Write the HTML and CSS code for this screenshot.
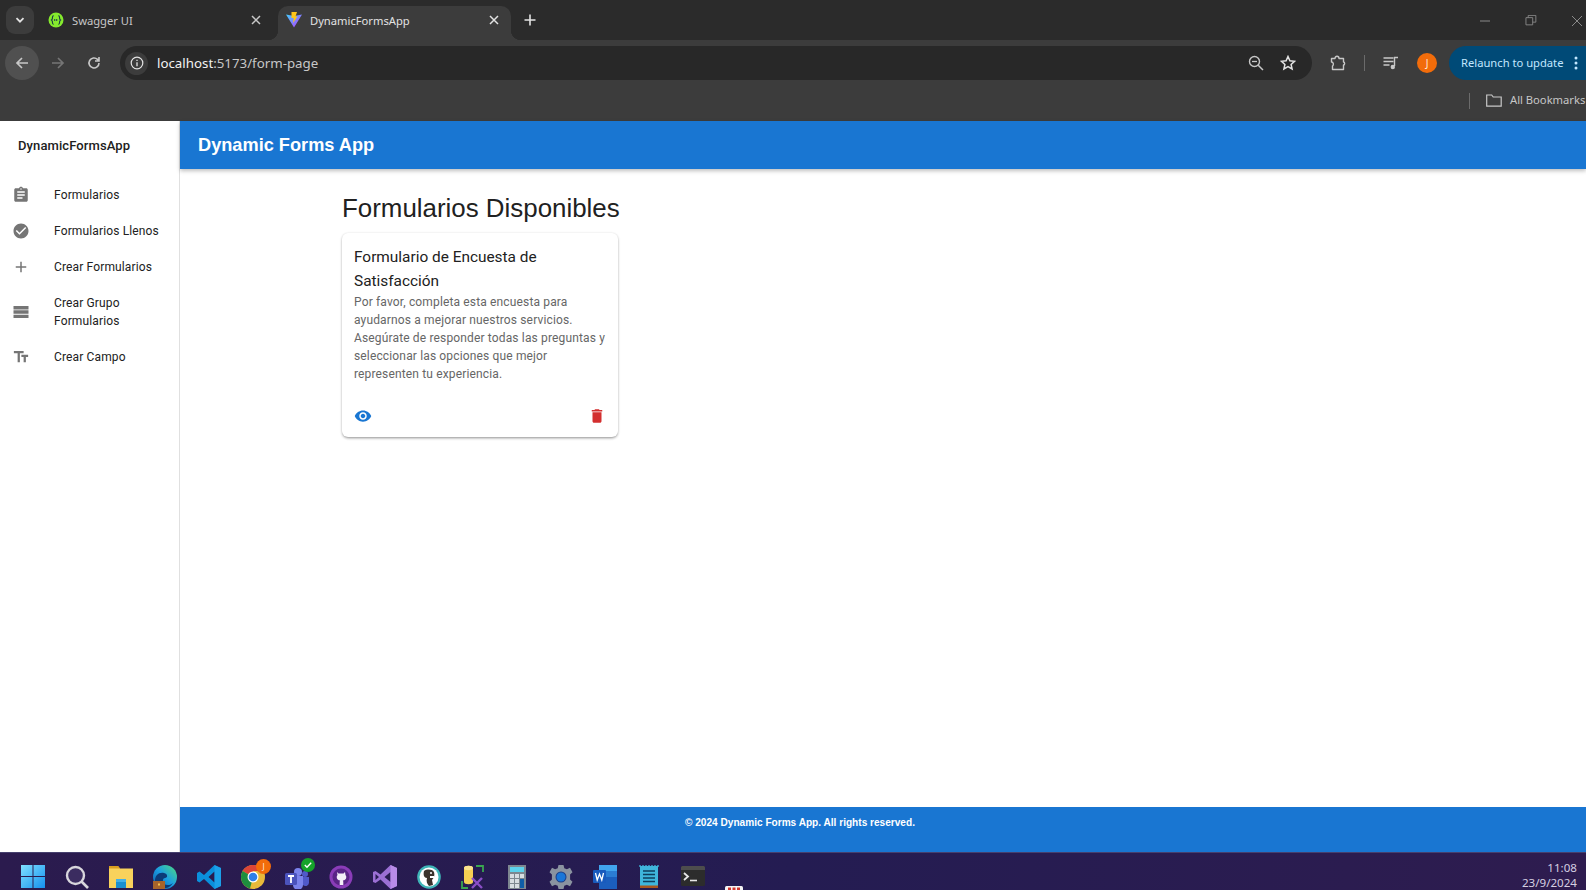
FILE: index.html
```html
<!DOCTYPE html>
<html lang="es">
<head>
<meta charset="utf-8">
<title>DynamicFormsApp</title>
<link rel="stylesheet" href="styles.css">
</head>
<body>
<div class="chrome">
  <div class="tabstrip">
    <div class="tab-search"><svg width="10" height="10" viewBox="0 0 10 10"><path d="M1.5 3.2 5 6.7l3.5-3.5" fill="none" stroke="#e3e3e3" stroke-width="1.8"/></svg></div>
    <div class="tab">
      <svg class="favicon" width="16" height="16" viewBox="0 0 16 16"><circle cx="8" cy="8" r="7.5" fill="#85ea2d"/><path d="M5.6 3.6C4 3.6 4.6 6 4.2 7.1 4 7.7 3.5 8 3.5 8s.5.3.7.9c.4 1.1-.2 3.5 1.4 3.5M10.4 3.6c1.6 0 1 2.4 1.4 3.5.2.6.7.9.7.9s-.5.3-.7.9c-.4 1.1.2 3.5-1.4 3.5" fill="none" stroke="#173647" stroke-width="1.1"/><path d="M6 8h4" stroke="#173647" stroke-width="1.3" stroke-dasharray="1.2 .7"/></svg>
      <span class="tab-title">Swagger UI</span>
      <svg class="tab-close" width="10" height="10" viewBox="0 0 10 10"><path d="M1 1l8 8M9 1 1 9" stroke="#c7c7c7" stroke-width="1.5"/></svg>
    </div>
    <div class="tab tab-active">
      <svg class="favicon" width="16" height="16" viewBox="0 0 16 16"><defs><linearGradient id="vt" x1="0" y1="0" x2="1" y2="1"><stop offset="0" stop-color="#41d1ff"/><stop offset="1" stop-color="#bd34fe"/></linearGradient></defs><path d="M0 2.5 8 15.5 16 2.5 8 4z" fill="url(#vt)"/><path d="M5.5 0H11L9.5 4.5H11.5L7 11l.7-5H5.5z" fill="#ffc517"/></svg>
      <span class="tab-title tab-title-active">DynamicFormsApp</span>
      <svg class="tab-close" width="10" height="10" viewBox="0 0 10 10"><path d="M1 1l8 8M9 1 1 9" stroke="#e3e3e3" stroke-width="1.5"/></svg>
    </div>
    <svg class="new-tab" width="12" height="12" viewBox="0 0 12 12"><path d="M6 .5v11M.5 6h11" stroke="#e3e3e3" stroke-width="1.6"/></svg>
    <div class="window-controls">
      <svg width="12" height="12" viewBox="0 0 12 12"><path d="M1 6h10" stroke="#8a8a8a"/></svg>
      <svg width="12" height="12" viewBox="0 0 12 12"><path d="M.5 3.5H8v8H.5zM3 3.5V1h8.500v7.500H8" fill="none" stroke="#8a8a8a" transform="translate(.5 -.5) scale(.9)"/></svg>
      <svg width="12" height="12" viewBox="0 0 12 12"><path d="M1 1l10 10M11 1 1 11" stroke="#8a8a8a"/></svg>
    </div>
  </div>
  <div class="toolbar">
    <div class="nav-btn nav-btn-back"><svg width="16" height="16" viewBox="0 0 16 16"><path d="M14 8H3M8 3 3 8l5 5" fill="none" stroke="#c7c7c7" stroke-width="1.7"/></svg></div>
    <div class="nav-btn"><svg width="16" height="16" viewBox="0 0 16 16"><path d="M2 8h11M8 3l5 5-5 5" fill="none" stroke="#757575" stroke-width="1.7"/></svg></div>
    <div class="nav-btn"><svg width="16" height="16" viewBox="0 0 16 16"><path d="M13 8a5 5 0 1 1-1.500-3.600L13 6M13 2v4H9" fill="none" stroke="#c7c7c7" stroke-width="1.6"/></svg></div>
    <div class="omnibox">
      <div class="site-info"><svg width="14" height="14" viewBox="0 0 14 14"><circle cx="7" cy="7" r="5.8" fill="none" stroke="#e3e3e3" stroke-width="1.2"/><path d="M7 6.200v4M7 3.800v1.300" stroke="#e3e3e3" stroke-width="1.3"/></svg></div>
      <span class="url"><span class="url-host">localhost</span>:5173/form-page</span>
      <svg class="omni-zoom" width="16" height="16" viewBox="0 0 16 16"><circle cx="6.5" cy="6.5" r="5" fill="none" stroke="#c7c7c7" stroke-width="1.4"/><path d="M10.200 10.200 15 15" stroke="#c7c7c7" stroke-width="1.5"/><path d="M4 6.500h5" stroke="#c7c7c7" stroke-width="1.3"/></svg>
      <svg class="omni-star" width="16" height="16" viewBox="0 0 16 16"><path d="m8 1.500 1.900 4.300 4.600.5-3.400 3.100 1 4.600L8 11.700l-4.100 2.300 1-4.600L1.500 6.300l4.600-.5z" fill="none" stroke="#e3e3e3" stroke-width="1.5"/></svg>
    </div>
    <svg class="tool-ext" width="16" height="16" viewBox="0 0 16 16"><path d="M1.500 3.500H5c0-3 4-3 4 0h4.500V7c1.500 0 1.500 3 0 3v4.500H2.500V11C4 10 3.500 7 1.500 7z" fill="none" stroke="#c7c7c7" stroke-width="1.4" stroke-linejoin="round"/></svg>
    <span class="tool-sep"></span>
    <svg class="tool-media" width="16" height="16" viewBox="0 0 16 16"><path d="M.5 3h10M.5 6.500h10M.5 10h6" stroke="#c7c7c7" stroke-width="1.3"/><path d="M11.500 11V2.500H15" fill="none" stroke="#c7c7c7" stroke-width="1.4"/><circle cx="9.800" cy="12" r="2.200" fill="#c7c7c7"/></svg>
    <span class="avatar">J</span>
    <div class="relaunch"><span class="relaunch-text">Relaunch to update</span><svg class="relaunch-dots" width="4" height="14" viewBox="0 0 4 14"><circle cx="2" cy="2" r="1.5" fill="#c2e7ff"/><circle cx="2" cy="7" r="1.5" fill="#c2e7ff"/><circle cx="2" cy="12" r="1.5" fill="#c2e7ff"/></svg></div>
  </div>
  <div class="bookmarks">
    <span class="bm-sep"></span>
    <svg class="bm-folder" width="16" height="13" viewBox="0 0 16 13"><path d="M.7 1h5l1.500 2h8v9.200H.7z" fill="none" stroke="#c7c7c7" stroke-width="1.2"/></svg>
    <span class="bm-text">All Bookmarks</span>
  </div>
</div>

<div class="app">
  <aside class="sidebar">
    <div class="brand">DynamicFormsApp</div>
    <nav class="menu">
      <a class="menu-item"><svg class="menu-icon" viewBox="0 0 24 24"><path d="M19 3h-4.180C14.400 1.840 13.300 1 12 1c-1.300 0-2.400.84-2.820 2H5c-1.100 0-2 .9-2 2v14c0 1.100.9 2 2 2h14c1.100 0 2-.9 2-2V5c0-1.100-.9-2-2-2zm-7 0c.55 0 1 .45 1 1s-.45 1-1 1-1-.45-1-1 .45-1 1-1zm2 14H7v-2h7v2zm3-4H7v-2h10v2zm0-4H7V7h10v2z"/></svg><span>Formularios</span></a>
      <a class="menu-item"><svg class="menu-icon" viewBox="0 0 24 24"><path d="M12 2C6.480 2 2 6.480 2 12s4.480 10 10 10 10-4.480 10-10S17.520 2 12 2zm-2 15-5-5 1.410-1.410L10 14.170l7.590-7.590L19 8l-9 9z"/></svg><span>Formularios Llenos</span></a>
      <a class="menu-item"><svg class="menu-icon" viewBox="0 0 24 24"><path d="M19 13h-6v6h-2v-6H5v-2h6V5h2v6h6v2z"/></svg><span>Crear Formularios</span></a>
      <a class="menu-item"><svg class="menu-icon" viewBox="0 0 24 24"><path d="M2 4h20v4.500H2zM2 9.800h20v4.400H2zM2 15.500h20V20H2z"/></svg><span>Crear Grupo Formularios</span></a>
      <a class="menu-item"><svg class="menu-icon" viewBox="0 0 24 24"><path d="M2.500 4v3h5v12h3V7h5V4h-13zm19 5h-9v3h3v7h3v-7h3V9z"/></svg><span>Crear Campo</span></a>
    </nav>
  </aside>
  <div class="main">
    <header class="appbar">Dynamic Forms App</header>
    <main class="content">
      <h1 class="page-title">Formularios Disponibles</h1>
      <article class="card">
        <h2 class="card-title">Formulario de Encuesta de Satisfacción</h2>
        <p class="card-desc">Por favor, completa esta encuesta para ayudarnos a mejorar nuestros servicios. Asegúrate de responder todas las preguntas y seleccionar las opciones que mejor representen tu experiencia.</p>
        <div class="card-actions">
          <svg class="act-icon act-view" viewBox="0 0 24 24"><path d="M12 4.500C7 4.500 2.730 7.610 1 12c1.730 4.390 6 7.500 11 7.500s9.270-3.110 11-7.500c-1.730-4.390-6-7.500-11-7.500zM12 17c-2.760 0-5-2.240-5-5s2.240-5 5-5 5 2.240 5 5-2.240 5-5 5zm0-8c-1.660 0-3 1.340-3 3s1.340 3 3 3 3-1.340 3-3-1.340-3-3-3z"/></svg>
          <svg class="act-icon act-del" viewBox="0 0 24 24"><path d="M6 19c0 1.100.9 2 2 2h8c1.100 0 2-.9 2-2V7H6v12zM19 4h-3.500l-1-1h-5l-1 1H5v2h14V4z"/></svg>
        </div>
      </article>
    </main>
    <footer class="footer">© 2024 Dynamic Forms App. All rights reserved.</footer>
  </div>
</div>

<div class="taskbar">
  <svg class="tb" viewBox="0 0 24 24"><defs><linearGradient id="win" x1="0" y1="0" x2="1" y2="1"><stop offset="0" stop-color="#7fe0ff"/><stop offset="1" stop-color="#1590ee"/></linearGradient></defs><path d="M0 0h11.500v11H0zM12.500 0H24v11H12.500zM0 12h11.500v11H0zM12.500 12H24v11H12.500z" fill="url(#win)"/></svg>
  <svg class="tb" viewBox="0 0 24 24"><circle cx="10.500" cy="10.500" r="8.500" fill="#3b2c60" stroke="#d8d6dc" stroke-width="2.4"/><path d="m16.500 16.500 6.500 6.500" stroke="#d8d6dc" stroke-width="2.6"/></svg>
  <svg class="tb" viewBox="0 0 24 24"><path d="M0 1h9l2 2.500h13V23H0z" fill="#f8d25c"/><path d="M0 1h9l2 2.500H0z" fill="#d99e20"/><path d="M7 14h10v9H7z" fill="#1a8fd0"/><path d="M7 14h10v3H7z" fill="#42b0e8"/></svg>
  <svg class="tb" viewBox="0 0 24 24"><defs><linearGradient id="edg" x1="1" y1="0" x2="0" y2="1"><stop offset="0" stop-color="#4fdc7c"/><stop offset=".5" stop-color="#1b9de2"/><stop offset="1" stop-color="#0c59a4"/></linearGradient></defs><circle cx="12" cy="12" r="12" fill="url(#edg)"/><path d="M2 16c0-6 4-9 9-8 4 .8 4 5 1 5-2 0-3 3-1 6 3 2 7 1 9-1-3 5-9 6-12 5-4-1-6-4-6-7z" fill="#0c3a78"/><path d="M0 16h12v8H0z" fill="#a8642a"/><path d="M5 18.500h2v2H5z" fill="#f4c050"/></svg>
  <svg class="tb" viewBox="0 0 24 24"><path d="M17.500 0 24 3v18l-6.500 3L7 14l-4.500 3.500L0 16v-8l2.500-1.500L7 10zM17.500 6.500 11.500 12l6 5.500z" fill="#0a8fdc" fill-rule="evenodd"/><path d="M17.500 0 24 3v18l-6.500 3z" fill="#22a7ee" opacity=".7"/></svg>
  <div class="tb tb-wrap">
    <svg class="tb" viewBox="0 0 24 24"><circle cx="12" cy="12" r="12" fill="#e9b93a"/><path d="M12 12 1.600 6A12 12 0 0 1 22.400 6H12z" fill="#db4437"/><path d="M12 12 1.600 6A12 12 0 0 0 9 23.600z" fill="#1e8e3e"/><circle cx="12" cy="12" r="5.500" fill="#fff"/><circle cx="12" cy="12" r="4.300" fill="#2f7fe8"/></svg>
    <span class="tb-badge tb-badge-j">J</span>
  </div>
  <div class="tb tb-wrap">
    <svg class="tb" viewBox="0 0 24 24"><circle cx="13" cy="7" r="4" fill="#7b83eb"/><circle cx="20" cy="9" r="3" fill="#5059c9"/><path d="M8 11h10v9a5 5 0 0 1-10 0z" fill="#7b83eb"/><path d="M18 12h6v6a3.500 3.500 0 0 1-6 2z" fill="#5059c9"/><rect x="0" y="8" width="12" height="12" rx="1.500" fill="#4b53bc"/><path d="M3 11h6M6 11v7" stroke="#fff" stroke-width="1.8"/></svg>
    <svg class="tb-check" viewBox="0 0 14 14"><circle cx="7" cy="7" r="7" fill="#15a32a"/><path d="m3.800 7 2.200 2.200 4.200-4.400" fill="none" stroke="#fff" stroke-width="1.4"/></svg>
  </div>
  <svg class="tb" viewBox="0 0 24 24"><circle cx="12" cy="12" r="11.500" fill="#8a3cb8"/><circle cx="12" cy="12" r="8.500" fill="#5a2486"/><path d="M8 7l1.500 1.500h5L16 7l.5 3c.5.600.8 1.300.8 2 0 2.200-1.500 3.200-3.500 3.500.3.400.5.900.5 1.400V20h-3.600v-3.100c0-.5.200-1 .5-1.400-2-.3-3.500-1.300-3.500-3.500 0-.7.300-1.400.8-2z" fill="#f4eef8"/></svg>
  <svg class="tb" viewBox="0 0 24 24"><path d="M17.500 0 24 3v18l-6.500 3L7.500 14.500 2.500 18 0 17V7l2.500-1L7.500 9.500zM17.500 7l-6 5 6 5zM2.500 9v6L6 12z" fill="#9b6fd4" fill-rule="evenodd"/><path d="M17.500 0 24 3v18l-6.500 3z" fill="#b98ce8"/></svg>
  <svg class="tb" viewBox="0 0 24 24"><circle cx="12" cy="12" r="11.800" fill="#3fb5b8"/><circle cx="12" cy="12" r="9.500" fill="#fff"/><path d="M7 6c3-2 8-2 10 1 1 3 0 6-2 8l1 5-4 1c-2-2-3-5-2-8-3 0-4-3-3-7z" fill="#3a322c"/><circle cx="14" cy="8" r="1" fill="#fff"/><path d="M13 11h4v2h-4z" fill="#fff"/></svg>
  <svg class="tb" viewBox="0 0 24 24"><path d="M3 3c0-3 9-3 9 0v14c0 3-9 3-9 0z" fill="#f6cf52"/><ellipse cx="7.500" cy="3" rx="4.500" ry="2.200" fill="#fbe38e"/><path d="M15 1h7v6M1 16v7h6" fill="none" stroke="#3aa650" stroke-width="1.8"/><path d="m11 13 10 10M21 13 11 23" stroke="#8a4fc7" stroke-width="2.4"/></svg>
  <svg class="tb" viewBox="0 0 24 24"><path d="M3 0h18v24H3z" fill="#7d8790"/><path d="M5 2h14v5H5z" fill="#5cd2ec"/><path d="M5 9h4v4H5zM10 9h4v4h-4zM5 14h4v4H5zM10 14h4v4h-4zM5 19h4v4H5zM10 19h4v4h-4zM15 9h4v4h-4z" fill="#d7dde2"/><path d="M15 14h4v9h-4z" fill="#0f5ea8"/></svg>
  <svg class="tb" viewBox="0 0 24 24"><path d="M9.500 0h5l.8 3.200 2.600 1.100L21 2.800l2.500 4.400-2.400 2.300v5l2.400 2.300L21 21.200l-3.100-1.500-2.600 1.100-.8 3.200h-5l-.8-3.200-2.600-1.100L3 21.200.5 16.800l2.400-2.300v-5L.5 7.200 3 2.800l3.100 1.500 2.600-1.100z" fill="#8a93a0"/><circle cx="12" cy="12" r="5.500" fill="#1f3f86"/><circle cx="12" cy="12" r="4.500" fill="#1976d8"/></svg>
  <svg class="tb" viewBox="0 0 24 24"><path d="M6 0h18v24H6z" fill="#1b5ebe"/><path d="M6 0h18v6H6z" fill="#41a5ee"/><path d="M6 6h18v6H6z" fill="#2b7cd3"/><rect x="0" y="5" width="13" height="13" rx="1" fill="#185abd"/><path d="m2.500 8 1.700 7 2.300-6 2.300 6 1.700-7" fill="none" stroke="#fff" stroke-width="1.3"/></svg>
  <svg class="tb" viewBox="0 0 24 24"><path d="M3 1h18v22H3z" fill="#3fb6dc"/><path d="M3 20.500h18V23H3z" fill="#a8561e"/><path d="M3 0v2M6 0v2M9 0v2M12 0v2M15 0v2M18 0v2M21 0v2" stroke="#3fb6dc" stroke-width="1.3"/><path d="M6 6h12M6 9.500h12M6 13h12M6 16.500h12" stroke="#0e3f5e" stroke-width="1.5"/></svg>
  <svg class="tb" viewBox="0 0 24 24"><rect y="1" width="24" height="20" rx="1.500" fill="#2c2c2c"/><path d="M0 5V2.500A1.500 1.500 0 0 1 1.500 1h21A1.500 1.500 0 0 1 24 2.500V5z" fill="#4d4d4d"/><path d="m3 8 4 3.500L3 15" fill="none" stroke="#e6e6e6" stroke-width="1.8"/><path d="M9 15.500h7" stroke="#e6e6e6" stroke-width="1.6"/></svg>
  <svg class="tb tb-last" viewBox="0 0 18 8"><path d="M0 1.500Q0 0 1.500 0h15Q18 0 18 1.500V8H0z" fill="#f4f4f4"/><path d="M3 1.500h3V8H3zM7.500 1.500h3V8h-3zM12 1.500h3V8h-3z" fill="#d2342c"/></svg>
  <div class="clock"><span>11:08</span><span>23/9/2024</span></div>
</div>
</body>
</html>
```

FILE: styles.css
```css
* { box-sizing: border-box; }
html, body { margin: 0; height: 890px; overflow: hidden; }
body { display: flex; flex-direction: column; width: 1586px; background: #fff; font-family: Roboto, sans-serif; }

/* Browser chrome */
.chrome { flex: none; height: 121px; background: #3c3c3c; font-family: "Noto Sans", "Open Sans", sans-serif; }
.tabstrip { height: 40px; background: #2b2b2b; display: flex; align-items: flex-start; padding: 6px 0 0 6px; }
.tab-search { flex: none; width: 28px; height: 28px; margin-right: 6px; border-radius: 9px; background: #3c3c3c; display: flex; align-items: center; justify-content: center; }
.tab { flex: none; height: 34px; width: 233px; display: flex; align-items: center; padding: 0 12px 6px 8px; position: relative; }
.tab + .tab { margin-left: 5px; }
.tab-active { background: #3c3c3c; border-radius: 10px 10px 0 0; }
.tab-active::before, .tab-active::after { content: ""; position: absolute; bottom: 0; width: 10px; height: 10px; }
.tab-active::before { left: -10px; background: radial-gradient(circle at 0 0, transparent 10px, #3c3c3c 10.5px); }
.tab-active::after { right: -10px; background: radial-gradient(circle at 100% 0, transparent 10px, #3c3c3c 10.5px); }
.favicon { flex: none; margin-right: 8px; }
.tab-title { flex: 1; font-size: 11.2px; color: #c7c7c7; white-space: nowrap; }
.tab-title-active { color: #e3e3e3; }
.tab-close { flex: none; }
.new-tab { margin: 8px 0 0 13px; flex: none; }
.window-controls { margin-left: auto; display: flex; gap: 34px; padding: 9px 3px 0 0; }

.toolbar { height: 40px; padding: 6px 0 0 4px; display: flex; align-items: center; }
.nav-btn { width: 34px; height: 34px; margin: 0 1px; border-radius: 50%; display: flex; align-items: center; justify-content: center; flex: none; }
.nav-btn-back { background: #505050; }
.omnibox { flex: none; width: 1192px; height: 34px; margin-left: 8px; border-radius: 17px; background: #282828; display: flex; align-items: center; padding-left: 5px; }
.site-info { width: 23px; height: 23px; border-radius: 50%; background: #3c3c3c; display: flex; align-items: center; justify-content: center; flex: none; }
.url { margin-left: 9px; flex: 1; font-size: 13.3px; color: #c7c7c7; }
.url-host { color: #f2f2f2; }
.omni-zoom { flex: none; }
.omni-star { flex: none; margin: 0 16px 0 16px; }
.tool-ext { flex: none; margin-left: 18px; }
.tool-sep { flex: none; width: 1px; height: 16px; background: #6b6b6b; margin-left: 18px; }
.tool-media { flex: none; margin-left: 18px; }
.avatar { flex: none; width: 20px; height: 20px; margin-left: 18px; border-radius: 50%; background: #f26c0a; color: #ffe9d8; font-size: 10px; display: flex; align-items: center; justify-content: center; }
.relaunch { flex: none; width: 150px; height: 34px; margin-left: 12px; border-radius: 17px 0 0 17px; background: #004a77; color: #c2e7ff; font-size: 11.2px; display: flex; align-items: center; padding-left: 12px; }
.relaunch-text { padding-bottom: 2px; }
.relaunch-dots { margin-left: 11px; flex: none; }
.bookmarks { height: 41px; display: flex; align-items: center; padding-left: 1469px; white-space: nowrap; }
.bm-sep { flex: none; width: 1px; height: 16px; background: #6b6b6b; }
.bm-folder { flex: none; margin-left: 16px; }
.bm-text { margin-left: 8px; padding-bottom: 2px; font-size: 11.2px; color: #c7c7c7; }

/* App */
.app { flex: none; height: 731px; display: flex; }
.sidebar { flex: none; width: 180px; border-right: 1px solid #e0e0e0; background: #fff; }
.brand { height: 48px; padding-left: 18px; display: flex; align-items: center; font-size: 13px; font-weight: 500; color: #212121; letter-spacing: .1px; }
.menu { padding-top: 8px; display: flex; flex-direction: column; }
.menu-item { display: flex; align-items: center; padding: 9px 12px; min-height: 36px; font-size: 12px; line-height: 18px; color: #212121; letter-spacing: .14px; }
.menu-icon { flex: none; width: 18px; height: 18px; margin: 0 24px 0 0; fill: #757575; }

.main { flex: 1; min-width: 0; display: flex; flex-direction: column; }
.appbar { flex: none; height: 48px; padding-left: 18px; display: flex; align-items: center; background: #1976d2; color: #fff; font-family: "Liberation Sans", Arial, sans-serif; font-size: 18.2px; font-weight: 700; box-shadow: 0 2px 4px rgba(0,0,0,.25); position: relative; }
.content { flex: 1; padding: 19px 0 0 162px; }
.page-title { margin: 0 0 5px; font-family: "Liberation Sans", Arial, sans-serif; font-size: 25.9px; line-height: 40px; font-weight: 400; color: #212121; }
.card { width: 276px; height: 204px; padding: 12px; border-radius: 6px; background: #fff; box-shadow: 0 2px 3px -1px rgba(0,0,0,.3), 0 1px 3px rgba(0,0,0,.16), 0 0 2px rgba(0,0,0,.08); display: flex; flex-direction: column; }
.card-title { margin: 0; font-size: 15.4px; line-height: 24px; font-weight: 400; color: #212121; }
.card-desc { margin: 0; font-size: 12px; line-height: 18px; color: #666; letter-spacing: .15px; }
.card-actions { margin-top: auto; height: 18px; display: flex; justify-content: space-between; }
.act-icon { width: 18px; height: 18px; flex: none; }
.act-view { fill: #1976d2; }
.act-del { fill: #d32f2f; }
.footer { flex: none; height: 45px; padding: 9px 0 0 505px; background: #1976d2; color: #fff; font-family: "Liberation Sans", Arial, sans-serif; font-size: 10.1px; line-height: 14px; font-weight: 700; }

/* Taskbar */
.taskbar { flex: none; height: 38px; padding: 12px 9px 0 21px; display: flex; align-items: flex-start; gap: 20px; overflow: hidden; background: linear-gradient(90deg, #2b1b4e, #241c52 50%, #2e1c4f); border-top: 1px solid #46406e; }
.tb { flex: none; width: 24px; height: 24px; display: block; }
.tb-wrap { position: relative; }
.tb-badge { position: absolute; top: -6px; right: -6px; width: 15px; height: 15px; border-radius: 50%; background: #f26c0a; color: #ffe9d8; font-family: "Noto Sans", sans-serif; font-size: 8px; line-height: 15px; text-align: center; }
.tb-check { position: absolute; top: -7px; right: -6px; width: 14px; height: 14px; }
.tb-last { width: 18px; height: 8px; margin-top: 21px; }
.clock { margin-left: auto; margin-top: -5px; display: flex; flex-direction: column; align-items: flex-end; font-family: "Noto Sans", sans-serif; font-size: 11.6px; line-height: 15px; color: #d5cfe2; }
```
